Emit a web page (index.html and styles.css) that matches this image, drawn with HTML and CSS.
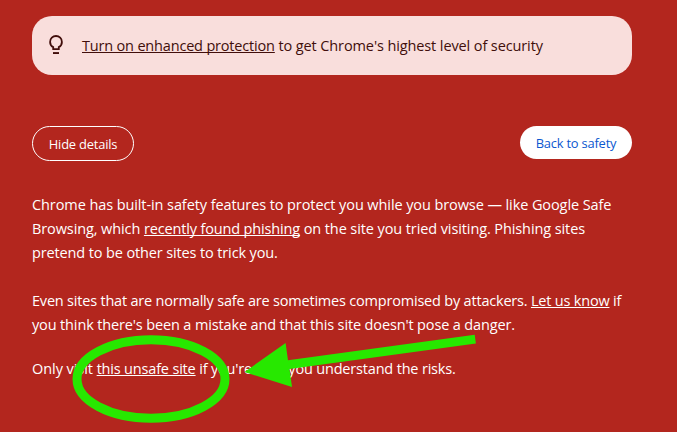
FILE: index.html
```html
<!DOCTYPE html>
<html lang="en">
<head>
<meta charset="utf-8">
<title>Dangerous site</title>
<link rel="stylesheet" href="styles.css">
</head>
<body>
<main class="page">
  <div class="banner">
    <svg class="bulb" viewBox="0 0 14 20" aria-hidden="true">
      <path d="M4.2 14.1V12.1Q1.1 10.4 1.1 6.9A5.9 5.9 0 0 1 12.9 6.9Q12.9 10.4 9.8 12.1V14.1Z" fill="none" stroke="currentColor" stroke-width="1.8"/>
      <path d="M4 17.1h6v1.9H4z" fill="currentColor"/>
    </svg>
    <p class="banner-text"><a href="#">Turn on enhanced protection</a> to get Chrome's highest level of security</p>
  </div>
  <div class="actions">
    <button class="button outline">Hide details</button>
    <button class="button filled">Back to safety</button>
  </div>
  <section class="details">
    <p><span class="line l1">Chrome has built-in safety features to protect you while you browse — like Google Safe</span>
    <span class="line l2">Browsing, which <a href="#">recently found phishing</a> on the site you tried visiting. Phishing sites</span>
    <span class="line l3">pretend to be other sites to trick you.</span></p>
    <p><span class="line l4">Even sites that are normally safe are sometimes compromised by attackers. <a href="#">Let us know</a> if</span>
    <span class="line l5">you think there's been a mistake and that this site doesn't pose a danger.</span></p>
    <p class="last"><span class="line l6"><span class="lead">Only visit </span><a href="#">this unsafe site</a> if you're sure you understand the risks.</span></p>
  </section>
</main>
<svg class="annotation" viewBox="0 0 677 432" aria-hidden="true">
  <ellipse cx="151" cy="379" rx="74" ry="39.2" fill="none" stroke="#27e800" stroke-width="9"/>
  <path d="M244.5 372 285.6 343 288 360.2 474.7 334.7 475.9 343.6 289.5 369 292 387Z" fill="#27e800"/>
</svg>
</body>
</html>
```

FILE: styles.css
```css
* { box-sizing: border-box; }
body {
  margin: 0;
  height: 432px;
  overflow: hidden;
  background: #b3261e;
  color: #fff;
  font: 14.5px/24px "Open Sans", "Noto Sans", sans-serif;
}
a { color: inherit; text-decoration: underline; text-decoration-thickness: 1px; text-underline-offset: 1px; text-decoration-skip-ink: none; }
p { margin: 0; }
.page { width: 600px; margin: 0 0 0 32px; padding-top: 16px; }
.banner {
  display: flex;
  align-items: center;
  height: 59px;
  padding-left: 17px;
  border-radius: 20px;
  background: #f9dedc;
  color: #410e0b;
}
.bulb { width: 14px; height: 20px; margin: 0 19px 1px 0; }
.banner-text { white-space: nowrap; letter-spacing: -.11px; }
.banner-text a { letter-spacing: -.18px; }
.actions { display: flex; justify-content: space-between; align-items: flex-start; margin-top: 51px; }
.button {
  height: 33px;
  padding: 0;
  border: 0;
  border-radius: 18px;
  font: 12.9px/20px "Open Sans", "Noto Sans", sans-serif;
  letter-spacing: -.2px;
}
.outline { width: 102px; height: 35px; border: 1px solid #fff; background: transparent; color: #fff; }
.filled { width: 112px; background: #fff; color: #0b57d0; }
.details { margin-top: 32px; }
.details p { margin-bottom: 24px; }
.details .last { margin-top: -4px; }
.line { display: block; width: max-content; white-space: nowrap; }
.l1 { letter-spacing: -.09px; }
.l2 { letter-spacing: -.1px; }
.l2 a { letter-spacing: -.15px; }
.l3 { letter-spacing: -.13px; }
.l4 { letter-spacing: -.2px; }
.l5 { letter-spacing: -.14px; }
.l6 { letter-spacing: -.18px; }
.lead { letter-spacing: -.06px; }
.annotation { position: absolute; left: 0; top: 0; width: 677px; height: 432px; pointer-events: none; }
```
